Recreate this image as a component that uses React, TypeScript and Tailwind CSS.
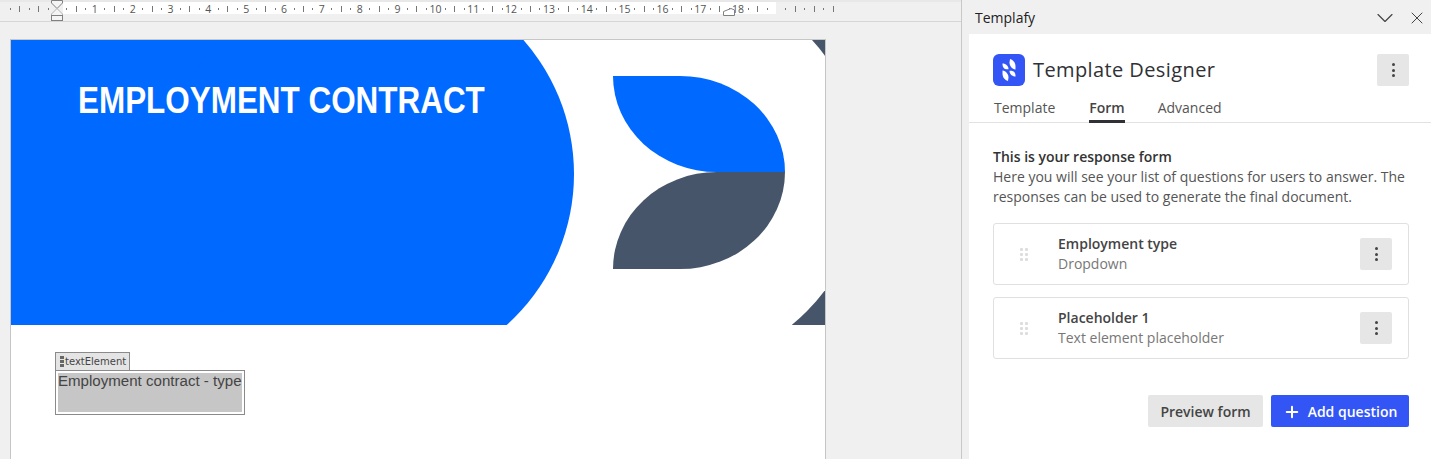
import { ChevronDown, Plus, X } from "lucide-react";

const TICKS = Array.from({ length: 82 + 6 }, (_, i) => i - 5);

const Ruler = () => (
  <div className="relative h-[22px] shrink-0 border-b border-[#d6d6d6] border-t-2 border-t-[#e8e8e8]">
    <svg width="961" height="22" className="absolute left-0 top-[-2px]">
      <rect x="63" y="2" width="713" height="12" fill="#ffffff" />
      {TICKS.map((k) => {
        const x = 57 + k * 9.46;
        if (k === 0 || k === 76) return null;
        if (k > 0 && k < 76 && k % 4 === 0) {
          return (
            <text key={k} x={x} y="12.5" textAnchor="middle" fontSize="10.5" fill="#555555" fontFamily="'Open Sans', sans-serif">
              {k / 4}
            </text>
          );
        }
        if (k % 2 === 0) return <rect key={k} x={Math.round(x)} y="6" width="1" height="6" fill="#777777" />;
        return <rect key={k} x={Math.round(x)} y="8" width="1" height="2" fill="#777777" />;
      })}
      <path d="M51.5 .5H62.5V3L57 8.5L51.5 3Z" fill="#f4f4f4" stroke="#808080" />
      <path d="M51.5 14L57 8.5L62.5 14V15.5H51.5Z" fill="#f4f4f4" stroke="#b5b5b5" />
      <rect x="51.5" y="15.5" width="11" height="5" fill="#f4f4f4" stroke="#808080" />
      <path d="M723.5 11.5L731 8.5L734.5 10V15.5H723.5Z" fill="#ffffff" stroke="#808080" />
    </svg>
  </div>
);

const Banner = () => (
  <div className="relative h-[285px]">
    <svg width="814" height="285" className="block">
      <rect x="657" width="157" height="285" fill="#465569" />
      <circle cx="657" cy="133" r="196" fill="#ffffff" />
      <rect width="360" height="285" fill="#0069ff" />
      <circle cx="360" cy="134" r="203" fill="#0069ff" />
      <path d="M602 36H669A105 96 0 0 1 774 132H706A104 96 0 0 1 602 36Z" fill="#0069ff" />
      <path d="M706 132H774A105 97 0 0 1 669 229H602A104 97 0 0 1 706 132Z" fill="#465569" />
    </svg>
    <h1 className="absolute left-[67px] top-[38px] origin-left scale-x-[0.873] whitespace-nowrap font-['Liberation_Sans',sans-serif] text-[36px] leading-[46px] font-bold text-white">
      EMPLOYMENT CONTRACT
    </h1>
  </div>
);

const TextElement = () => (
  <div className="ml-[44px] mt-[27px] w-[190px]">
    <div className="flex h-[18px] w-[75px] items-center gap-[1px] border border-b-0 border-[#8a8a8a] bg-[#e4e4e4] pl-[4px]">
      <div className="flex flex-col gap-[1px]">
        <div className="h-[3px] w-[4px] bg-[#666666]" />
        <div className="h-[3px] w-[4px] bg-[#666666]" />
        <div className="h-[3px] w-[4px] bg-[#666666]" />
      </div>
      <span className="pt-[1px] font-['DejaVu_Sans',sans-serif] text-[10px] leading-none text-[#444444]">textElement</span>
    </div>
    <div className="h-[45px] border border-[#8a8a8a] p-[2px]">
      <div className="h-full bg-[#c6c6c6] font-['Liberation_Sans',sans-serif] text-[15.08px] leading-[16px] whitespace-nowrap text-[#444444]">
        Employment contract - type
      </div>
    </div>
  </div>
);

const Kebab = () => (
  <button className="flex h-8 w-8 shrink-0 flex-col items-center justify-center gap-[2.5px] rounded-[2px] bg-[#e6e6e6]">
    <span className="h-[3px] w-[3px] rounded-full bg-[#444444]" />
    <span className="h-[3px] w-[3px] rounded-full bg-[#444444]" />
    <span className="h-[3px] w-[3px] rounded-full bg-[#444444]" />
  </button>
);

const QuestionCard = ({ title, type }: { title: string; type: string }) => (
  <div className="flex h-[62px] items-center rounded-[3px] border border-[#e0e0e0] pr-4 pl-[26px]">
    <svg width="8" height="13" className="shrink-0" fill="#dddddd">
      <rect width="3" height="3" rx="1" />
      <rect x="5" width="3" height="3" rx="1" />
      <rect y="5" width="3" height="3" rx="1" />
      <rect x="5" y="5" width="3" height="3" rx="1" />
      <rect y="10" width="3" height="3" rx="1" />
      <rect x="5" y="10" width="3" height="3" rx="1" />
    </svg>
    <div className="ml-[30px] flex-1 text-sm leading-5">
      <div className="font-semibold text-[#444444]">{title}</div>
      <div className="text-[#777777]">{type}</div>
    </div>
    <Kebab />
  </div>
);

const Panel = () => (
  <aside className="flex w-[470px] shrink-0 flex-col border-l border-[#c8c8c8] bg-[#f0f0f0] pl-[7px] font-['Open_Sans',sans-serif]">
    <div className="flex h-[34px] shrink-0 items-center pr-[4px] pl-[6px] pt-[2px]">
      <span className="flex-1 text-sm text-[#222222]">Templafy</span>
      <ChevronDown className="h-[28px] w-[28px] text-[#444444]" strokeWidth={1} />
      <X className="ml-[8px] h-[20px] w-[20px] text-[#444444]" strokeWidth={1.2} />
    </div>
    <div className="flex-1 bg-white">
      <div className="flex items-center pt-5 pr-[22px] pl-6">
        <svg width="32" height="32" viewBox="0 0 32 32" className="shrink-0">
          <rect width="32" height="32" rx="6" fill="#3355f5" />
          <path d="M17 5C20.500 6 22.500 9 22.500 12.500V15.500C19 15 16.500 12 16.500 8.500Z" fill="#ffffff" />
          <path d="M9.500 9.500C13 9.500 15.500 12 15.500 15.300H13.500C11 15.300 9.500 13 9.500 10.500Z" fill="#ffffff" />
          <path d="M15 27C11.500 26 9.500 23 9.500 19.500V16.500C13 17 15.500 20 15.500 23.500Z" fill="#ffffff" />
          <path d="M22.500 22.500C19 22.500 16.500 20 16.500 16.700H18.500C21 16.700 22.500 19 22.500 21.500Z" fill="#ffffff" />
        </svg>
        <h2 className="ml-2 flex-1 text-xl font-medium tracking-[0.4px] text-[#2f3136]">Template Designer</h2>
        <Kebab />
      </div>
      <nav className="mt-[11px] flex h-[26px] gap-[34px] border-b border-[#e2e2e2] pl-[25px] text-sm text-[#555555]">
        <span className="leading-[22px]">Template</span>
        <span className="h-[26px] border-b-[3px] border-[#2f3136] leading-[22px] font-semibold text-[#444444]">Form</span>
        <span className="-ml-px leading-[22px]">Advanced</span>
      </nav>
      <div className="pt-6 pr-[22px] pl-6">
        <p className="text-sm leading-5 text-[#555555]">
          <strong className="block font-semibold text-[#333333]">This is your response form</strong>
          Here you will see your list of questions for users to answer. The responses can be used to generate the final document.
        </p>
        <div className="mt-4 flex flex-col gap-3">
          <QuestionCard title="Employment type" type="Dropdown" />
          <QuestionCard title="Placeholder 1" type="Text element placeholder" />
        </div>
        <div className="mt-9 flex justify-end gap-2">
          <button className="h-8 w-[115px] rounded-[2px] bg-[#e6e6e6] pt-[1px] text-sm font-semibold text-[#444444]">Preview form</button>
          <button className="flex h-8 w-[138px] items-center justify-center gap-[7px] rounded-[2px] bg-[#3355f5] pt-[1px] text-sm font-semibold text-white">
            <Plus className="h-[18px] w-[18px]" strokeWidth={2.7} />
            Add question
          </button>
        </div>
      </div>
    </div>
  </aside>
);

const App = () => (
  <div className="flex h-[459px] w-[1431px] overflow-hidden bg-[#f0f0f0]">
    <main className="flex w-[961px] shrink-0 flex-col">
      <Ruler />
      <div className="ml-[10px] mt-[17px] w-[816px] flex-1 border-x border-t border-[#c6c6c6] bg-white">
        <Banner />
        <TextElement />
      </div>
    </main>
    <Panel />
  </div>
);

export default App;
